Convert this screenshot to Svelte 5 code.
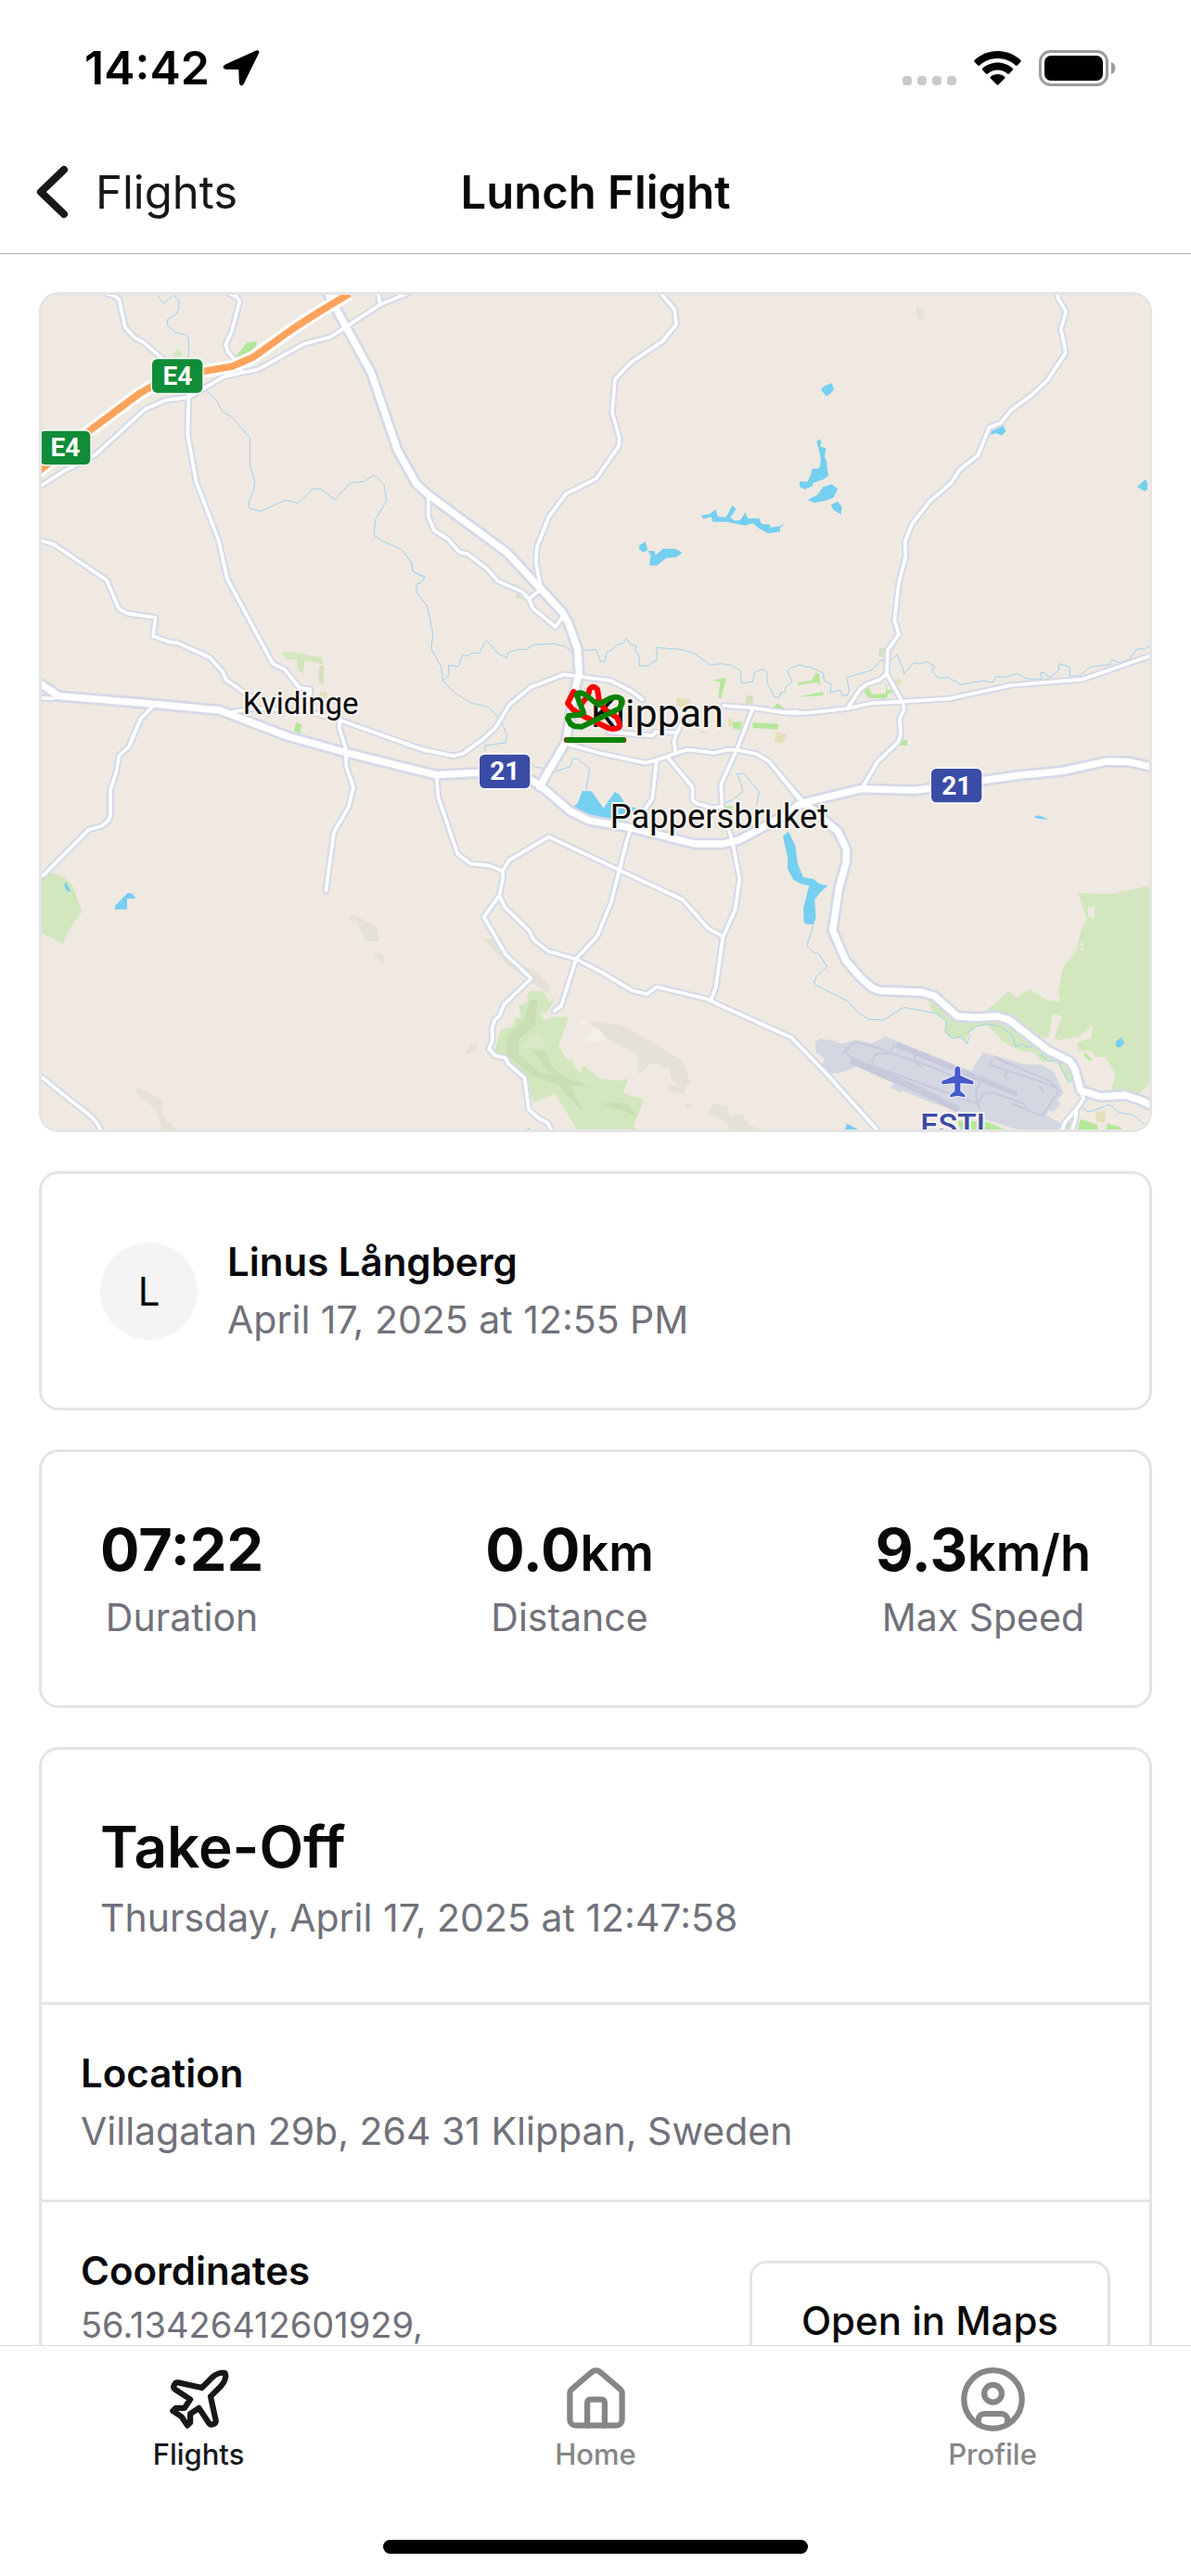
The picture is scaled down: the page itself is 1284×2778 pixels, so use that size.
<script lang="ts">
  interface Tile {
    x: number;
    y: number;
    streams?: string[];
    roads?: string[];
    majorRoads?: string[];
  }

  // Road and stream lines, one entry per map tile
  const tiles: Tile[] = [
    {
      x: 0,
      y: 0,
      streams: [
        "M385 20L410 52 440 24 458 40 458 72 443 93 422 103 422 124 452 148 478 152 490 163 490 225",
        "M548 335L577 360 600 402 632 420 689 488 689 580 704 627 701 655 684 697 687 715 724 724 800 689 846 697 893 650 917 652 963 687 1013 632 1058 628 1087 608 1097 612 1123 640 1130 690 1094 752 1090 803 1115 820 1178 847 1210 890 1215 918 1255 938"
      ],
      roads: [
        "M225 20L245 25 265 38 285 130 315 162 345 178 410 235",
        "M620 20L645 30 655 45 630 140 610 185 617 208 640 235 660 268",
        "M15 640L90 592 190 540 350 393 418 364 490 355 605 288 715 265 862 183 950 160 1110 55 1215 12",
        "M490 350L487 478 515 630 587 818 615 943 762 1217 800 1235 848 1295 883 1300 880 1340",
        "M1110 55L1103 20",
        "M15 820L52 830 225 947 265 1040 292 1055 383 1068 375 1128 428 1147 455 1150 558 1197 600 1243 612 1270 690 1324",
        "M15 1328L50 1330 70 1322"
      ],
      majorRoads: [
        "M935 10L1080 275 1165 525 1225 633 1262 668 1520 858 1615 960 1700 1052 1720 1090 1748 1170 1753 1250 1735 1320 1710 1470 1625 1615",
        "M15 1285L70 1322 380 1348 590 1368 700 1410 810 1452 1000 1505 1200 1555 1290 1577 1430 1570 1600 1595"
      ]
    },
    {
      x: 1200,
      y: 0,
      streams: [
        "M10 890L15 918 55 938 42 955 27 960 27 987 62 1030 80 1120 75 1170 107 1227 112 1272 148 1310 205 1345 260 1357 290 1390 303 1410 320 1447 315 1473 250 1482 248 1500",
        "M112 1272L133 1253 130 1222 162 1227 175 1190 195 1192 207 1183 230 1183 250 1145 258 1145 287 1182 318 1198 325 1180 362 1170 382 1172 408 1155 475 1153 508 1162 530 1178 560 1175 608 1172 622 1210 637 1210 643 1180 660 1172 672 1157 693 1153 705 1135 718 1153 738 1160 733 1173 748 1192 747 1224 780 1224 787 1214 805 1206 803 1165 890 1172 930 1187 978 1222 1012 1217 1045 1222 1075 1240 1078 1280 1113 1276 1122 1243 1150 1235 1160 1245 1162 1282 1185 1326 1200 1325 1205 1312"
      ],
      roads: [
        "M818 20L862 72 867 120 823 174 720 243 669 297 660 405 683 487 682 512 608 619 510 668 455 742 417 838 413 890 428 965",
        "M66 680L65 742 85 787 130 815 167 857 192 862 255 910 290 950 370 985 390 1008 405 1040 477 1098 500 1065",
        "M390 1008L425 980"
      ]
    },
    {
      x: 2400,
      y: 0,
      streams: [
        "M0 1325L5 1312 20 1308 20 1295 42 1275 27 1243 35 1232 67 1221 85 1228 100 1227 143 1248 145 1272 168 1283 165 1310 198 1303 203 1320 220 1320 227 1305 218 1263 302 1237 325 1208 370 1198 382 1188 400 1232 403 1250 435 1214 455 1218 475 1210 503 1225 495 1240 512 1263 550 1263 588 1285 658 1273 690 1278 703 1258 728 1262 770 1249 798 1265 850 1268 845 1247 858 1247 875 1263 905 1238 903 1217 940 1228 940 1257 970 1257 1008 1227 1070 1220 1075 1205 1103 1214 1132 1204 1158 1169 1180 1170 1200 1158"
      ],
      roads: [
        "M900 20L903 37 928 78 911 136 922 180 926 212 868 300 818 347 752 395 717 438 680 452 643 543 583 590 557 632 487 692 430 765 407 822 409 870 387 955 373 1077 387 1122 351 1173 348 1250 398 1340 404 1365 390 1395 393 1450 385 1470 318 1535 268 1620",
        "M348 1250L325 1270 285 1283 262 1300 222 1360",
        "M0 1373L50 1378 105 1375 222 1362 300 1345 398 1340 553 1330 750 1287 980 1268 1200 1192"
      ]
    },
    {
      x: 0,
      y: 1350,
      roads: [
        "M380 0L335 45 297 135 265 165 257 215 237 275 237 360 230 375 210 392 167 404 22 550 5 556",
        "M980 50L977 75 998 140 1000 200 1023 267 1007 332 960 412 934 602",
        "M15 1205L178 1335 190 1348 212 1385",
        "M620 25L700 12 870 20 980 50 1260 150"
      ]
    },
    {
      x: 1200,
      y: 1170,
      streams: [
        "M400 370L412 382 450 387 480 395 525 380 533 355 548 355 587 387 575 460",
        "M1020 500L1050 487 1082 462 1078 437 1063 403 1087 403 1135 463 1127 505"
      ],
      roads: [
        "M0 310L50 325 147 346 177 338 240 293 282 255 328 180 395 124 505 82 550 88 655 102 720 135 757 163",
        "M1020 183L1115 190 1215 205 1260 203",
        "M1115 190L1063 325 1012 437 1015 510 1048 620 1072 742 1058 842 1018 932 995 1095 978 1137",
        "M510 305L625 338 765 368 800 360 902 325 990 336 1030 326 1065 326 1128 340 1165 362 1275 490",
        "M650 268L790 280 800 268 870 270 885 240",
        "M865 335L860 300 868 268",
        "M838 348L920 447 920 490 935 500 985 513 1015 510",
        "M803 365L790 483 765 520",
        "M92 410L97 478 160 663 203 695 262 700 305 718 327 683 455 607 683 715 887 810 970 903 1018 930",
        "M305 718L307 740 295 797 245 867 315 987 398 1065 310 1150 295 1187 280 1200 272 1225 272 1268 261 1293 281 1315 315 1323 322 1340 377 1388 390 1490 425 1520 450 1532 468 1565",
        "M295 797L313 835 392 912 405 940 452 977 543 1003 625 1045 725 1105 772 1117 803 1093 960 1130 1240 1257 1350 1370 1530 1570",
        "M718 590L710 610 683 715 657 818 612 928 543 1003 495 1155 473 1170"
      ],
      majorRoads: [
        "M400 425L425 440 525 525 585 555 720 578 925 630 1020 630 1070 618 1170 565 1275 498"
      ]
    },
    {
      x: 2400,
      y: 1290,
      streams: [
        "M113 765L90 840 112 862 127 865 155 907 120 940 113 957 118 967 220 1018 257 1057 290 1078 338 1080 403 1039 513 1060 540 1085 537 1118 558 1138 588 1135 607 1158 617 1130 610 1120 637 1100 672 1093 715 1100 752 1127 765 1165 785 1155 797 1168 825 1165",
        "M848 1187L850 1197 873 1213 900 1213 935 1280 947 1277",
        "M975 1350L993 1375 1012 1375 1068 1353 1100 1380 1145 1387 1182 1418"
      ],
      roads: [
        "M0 285L75 378",
        "M975 1308L985 1335 960 1370 925 1410 912 1445",
        "M962 1370L958 1405 943 1445"
      ],
      majorRoads: [
        "M60 385L75 378 265 332 440 337 490 330 660 305 780 288 915 275 1060 243 1130 245 1205 261",
        "M75 378L110 400 155 440 190 470 217 527 217 567 193 655 173 790 215 887 265 945 300 975 325 985 460 990 503 1003 577 1068 640 1072 705 1068 743 1080 873 1180 940 1213 957 1240 975 1308 1040 1328 1120 1323 1170 1340 1205 1357"
      ]
    }
  ];

  const motorway = "M5 595L170 463 330 344 370 320 455 285 545 270 630 256 700 225 825 135 910 80 1010 20";

  const shields = [
    { label: "E4", x: 372, y: 232, color: "#118c38" },
    { label: "E4", x: 9, y: 464, color: "#118c38" },
    { label: "21", x: 1431, y: 1511, color: "#3b4ca6" },
    { label: "21", x: 2892, y: 1557, color: "#3b4ca6" }
  ];

  const stats = [
    { value: "07:22", unit: "", label: "Duration" },
    { value: "0.0", unit: "km", label: "Distance" },
    { value: "9.3", unit: "km/h", label: "Max Speed" }
  ];

  let activeTab = "Flights";
</script>

<div class="screen">
  <div class="status-bar">
    <div class="status-left">
      <span>14:42</span>
      <svg width="40" height="40" viewBox="0 0 40 40" aria-hidden="true">
        <path d="M36 1.500 3 16.500C-.5 18.300 0 21.500 4 21.700L17.300 22 17.800 35.500C18 40 21.500 40.300 23 37L39 4.500C40 2 38.500.5 36 1.500Z" />
      </svg>
    </div>
    <div class="status-right">
      <svg width="58" height="39" viewBox="0 0 58 39" fill="#c9c9c9" aria-hidden="true">
        <rect x="0" y="28" width="10" height="10" rx="4" />
        <rect x="16" y="28" width="10" height="10" rx="4" />
        <rect x="32" y="28" width="10" height="10" rx="4" />
        <rect x="48" y="28" width="10" height="10" rx="4" />
      </svg>
      <svg width="51" height="37" viewBox="0 0 51 37" aria-hidden="true">
        <path d="M25.500 0C35 0 43.700 3.600 50.300 9.800 50.900 10.400 50.900 11.200 50.400 11.800L46.700 15.500C46.200 16 45.400 16 44.800 15.500 39.600 10.700 32.900 8 25.500 8 18.100 8 11.400 10.700 6.200 15.500 5.600 16 4.800 16 4.300 15.500L.6 11.800C.1 11.200.1 10.400.7 9.800 7.300 3.600 16 0 25.500 0Z" />
        <path d="M25.500 12.500C31.700 12.500 37.400 14.800 41.800 18.700 42.400 19.200 42.400 20 41.800 20.600L38 24.400C37.500 24.900 36.700 24.900 36.100 24.400 33.200 21.900 29.500 20.400 25.500 20.400 21.500 20.400 17.800 21.900 14.900 24.400 14.300 24.900 13.500 24.900 13 24.400L9.200 20.600C8.600 20 8.600 19.200 9.200 18.700 13.600 14.800 19.300 12.500 25.500 12.500Z" />
        <path d="M25.500 25C28.400 25 31 26 33.100 27.700 33.700 28.200 33.700 29 33.200 29.500L26.500 36.200C25.900 36.800 25.100 36.800 24.500 36.200L17.800 29.500C17.300 29 17.300 28.200 17.900 27.700 20 26 22.600 25 25.500 25Z" />
      </svg>
      <svg width="84" height="39" viewBox="0 0 84 39" aria-hidden="true">
        <rect x="1.500" y="1.500" width="72" height="36" rx="11" fill="none" stroke="#9b9b9b" stroke-width="3" />
        <rect x="6" y="6" width="63" height="27" rx="7" />
        <path d="M78 13C84 15 84 24 78 26Z" fill="#9b9b9b" />
      </svg>
    </div>
  </div>

  <header class="nav">
    <a class="back" href="#flights">
      <svg width="36" height="60" viewBox="0 0 36 60" fill="none" stroke="#18181b" stroke-width="8" stroke-linecap="round" stroke-linejoin="round" aria-hidden="true">
        <path d="M30 6 5 30 30 54" />
      </svg>
      Flights
    </a>
    <h1>Lunch Flight</h1>
  </header>

  <main>
    <section class="card map">
      <svg viewBox="15 24 3582 2700" role="img" aria-label="Flight map">
        <rect x="15" y="24" width="3582" height="2700" fill="#efe9e1" />

        <!-- Hills -->
        <g fill="#e5e1d6">
          <path d="M2844 57L2870 75 2863 108 2844 98ZM1025 2028L1100 2072 1107 2115 1063 2115 1035 2055 1008 2045ZM1098 2145L1126 2162 1117 2187 1090 2163ZM325 2587L404 2627 405 2675 450 2724 405 2724 380 2657 315 2602Z" />
          <path d="M1440 2106L1480 2110 1540 2185 1600 2205 1635 2235 1655 2260 1655 2285 1600 2250 1525 2195ZM1380 2482L1405 2448 1422 2447 1422 2467Z" />
          <path d="M1780 2370L1890 2387 1960 2425 2088 2502 2115 2580 2100 2582 2090 2610 2043 2600 2043 2582 2073 2582 2050 2557 2047 2528 2017 2525 2015 2512 1985 2510 1945 2548 1943 2480 1860 2440ZM2190 2640L2234 2650 2240 2680 2280 2675 2303 2710 2340 2724 2240 2724 2230 2700 2170 2672ZM2100 2640L2122 2654 2097 2653Z" />
        </g>
        <g fill="#f3eee8">
          <path d="M1755 2372L1770 2366 1775 2380 1755 2385ZM1770 2425L1800 2395 1822 2403 1840 2438 1775 2440ZM845 1949L878 1954 847 1962Z" />
        </g>

        <!-- Forest -->
        <g fill="#d2e7bd">
          <path d="M15 1895L45 1892 95 1911 117 1940 145 2020 107 2072 82 2124 15 2087Z" />
          <path d="M1590 2276L1637 2276 1655 2312 1676 2295 1650 2348 1625 2345 1640 2370 1670 2360 1719 2362 1686 2453 1712 2497 1733 2503 1735 2520 1757 2538 1768 2517 1820 2560 1880 2567 1911 2560 1895 2605 1940 2622 1948 2620 1962 2630 1928 2715 1945 2724 1745 2724 1676 2608 1605 2638 1580 2560 1520 2510 1480 2470 1500 2400 1538 2392 1548 2362 1565 2362 1557 2322 1585 2312Z" />
          <path d="M3366 1959L3470 1963 3597 1936 3597 2578 3560 2610 3475 2600 3487 2543 3455 2490 3420 2490 3410 2468 3390 2470 3370 2470 3363 2442 3410 2430 3415 2385 3370 2425 3320 2430 3305 2437 3290 2428 3315 2358 3285 2350 3272 2425 3225 2427 3143 2370 3067 2343 3142 2277 3168 2297 3210 2270 3268 2307 3310 2310 3303 2280 3318 2200 3362 2145 3375 2085 3395 2040Z" />
          <path d="M2883 2307L2920 2318 2975 2362 3100 2370 3150 2400 3225 2460 3340 2510 3350 2560 3338 2572 3297 2503 3250 2505 3222 2475 3180 2470 3125 2440 3072 2387 3035 2390 3008 2420 3005 2448 2988 2425 2950 2425 2935 2405 2940 2370 2895 2345Z" />
          <path d="M437 220L452 198 465 208 468 225ZM792 1182L822 1179 922 1197 924 1218 866 1206 860 1249 841 1235 840 1204 805 1204Z" />
        </g>
        <g fill="#c9deb3">
          <path d="M1595 2305L1618 2303 1610 2390 1560 2430 1555 2480 1620 2535 1720 2560 1790 2585 1720 2580 1770 2670 1710 2610 1690 2580 1600 2550 1520 2480 1520 2420 1575 2370ZM1600 2465L1640 2470 1665 2520 1710 2560 1650 2535ZM1820 2638L1912 2640 1937 2680Z" />
        </g>
        <path d="M1590 2425L1620 2410 1638 2425 1640 2460 1570 2460Z" fill="#d9eac9" />
        <path d="M3398 2006L3420 2003 3420 2040 3400 2038ZM3372 2120H3382V2130H3372ZM3375 2135H3385V2145H3375Z" fill="#efe9e1" />

        <!-- Parks -->
        <g fill="#b5e79b">
          <path d="M640 225L680 178 711 174 705 195 670 225ZM838 1407L857 1413 851 1443 831 1435ZM2185 1270L2228 1263 2213 1330 2203 1328 2210 1277ZM2460 1277L2505 1272 2520 1247 2530 1250 2533 1287 2520 1277 2460 1287ZM2457 1325L2542 1308 2543 1320ZM2672 1305L2690 1295 2700 1317 2745 1313 2745 1275 2750 1303 2770 1300 2770 1310 2752 1315 2748 1330 2690 1328ZM2787 1465H2814V1482H2787Z" />
          <path d="M2250 1405L2280 1407 2275 1430 2250 1427ZM2315 1407L2398 1413 2395 1430 2315 1425ZM2380 1360L2395 1345 2422 1365 2385 1368ZM2225 1680L2250 1678 2245 1693ZM2140 1435L2160 1437 2157 1442ZM3388 2473L3412 2500 3405 2502 3385 2485Z" />
          <path d="M2975 2695L3075 2700 3130 2724 2985 2724ZM3195 2700L3240 2715 3230 2724 3185 2724ZM3375 2690L3430 2710 3430 2724 3365 2724ZM3460 2705L3500 2715 3510 2724 3460 2724ZM3325 2715L3342 2692 3335 2724Z" />
        </g>
        <g fill="#e5dfba">
          <path d="M915 1307L938 1308 935 1328 915 1325ZM2067 1328L2112 1332 2110 1355 2070 1355ZM2235 1395L2252 1397 2250 1420 2235 1420ZM2390 1437L2425 1445 2410 1475 2385 1470ZM2775 1275L2785 1265 2796 1278 2785 1290ZM3425 2667L3455 2665 3453 2702 3423 2697Z" />
        </g>
        <g fill="#d8dfbd">
          <path d="M910 1245L915 1224 927 1224 927 1281 912 1281ZM1545 1000L1555 990 1580 1015ZM2293 1320H2315V1346H2292ZM2724 1167H2742V1193H2721Z" />
        </g>

        <!-- Airfield -->
        <path d="M2515 2445L2530 2430 2570 2435 2600 2447 2650 2435 2700 2445 2745 2423 3020 2535 3060 2475 3200 2515 3250 2515 3290 2540 3320 2605 3300 2630 3310 2640 3290 2665 3270 2665 3265 2680 3315 2705 3305 2724 3170 2724 2900 2640 2800 2600 2795 2605 2760 2590 2770 2575 2650 2520 2600 2540 2555 2545 2560 2535 2540 2515 2548 2495 2520 2475Z" fill="#d4d7e1" />
        <g fill="none" stroke="#c6c8dc" stroke-width="6">
          <path d="M2633 2500L2860 2600 2980 2660" stroke-width="22" />
          <path d="M2780 2450L3170 2610" stroke-width="18" />
          <path d="M2605 2480L2645 2440 2720 2460 2765 2480 2850 2505 2960 2550M2640 2495Q2605 2475 2620 2455M2700 2525Q2700 2485 2720 2478L2755 2478 2775 2450M2860 2520Q2830 2510 2840 2485M2705 2520L3040 2640 3060 2610 3090 2605 3190 2640 3205 2660M3050 2660Q3030 2620 3040 2590L3060 2550M3090 2500L3080 2515 3220 2560 3300 2590M3095 2490L3280 2570 3305 2600 3250 2680 3150 2640M3145 2530L3130 2550 3140 2560M3240 2580L3255 2605" />
        </g>

        <!-- Lakes -->
        <g fill="#75cff0">
          <path d="M2535 330L2548 318 2570 310 2577 330 2565 345 2552 352ZM2521 500L2530 490 2536 500 2533 515 2552 520 2547 548 2553 560 2559 610 2545 620 2510 632 2508 642 2483 653 2466 645 2466 628 2492 628 2505 600 2505 588 2530 585 2535 555 2527 518ZM2492 688L2525 670 2542 645 2570 637 2590 652 2575 680 2550 690 2513 697ZM2568 703L2590 692 2603 710 2600 734 2575 720ZM3084 478L3085 465 3125 448 3134 464 3120 479 3100 470ZM3558 645L3584 621 3591 630 3591 653 3582 659Z" />
          <path d="M1947 835L1967 822 1975 848 1962 857 1948 848ZM1975 852L1997 853 2000 866 2025 845 2065 846 2087 858 2068 872 2035 875 2005 899 1980 899 1985 868ZM2148 738L2175 733 2195 718 2202 742 2228 743 2248 706 2261 717 2242 745 2258 755 2275 752 2291 727 2298 747 2335 747 2343 765 2370 767 2372 776 2400 773 2419 763 2403 778 2403 790 2365 796 2335 780 2315 763 2290 770 2230 758 2185 758 2180 742 2155 749Z" />
          <path d="M87 1935L93 1923 110 1955 97 1952ZM252 2012V2000L293 1959 308 1961 320 1977 291 1978V2012Z" />
          <path d="M1730 1683L1748 1670 1763 1629 1793 1630 1832 1685 1868 1632 1883 1640 1905 1675 1950 1688 1920 1712 1850 1720 1770 1700Z" />
          <path d="M2412 1775L2430 1760 2452 1805 2460 1865 2478 1908 2513 1915 2530 1930 2557 1935 2535 1955 2515 1980 2519 2040 2510 2060 2490 2060 2480 2055 2478 2010 2497 1935 2470 1930 2445 1915 2427 1880 2428 1845ZM3222 1713L3240 1708 3273 1721 3235 1718ZM3489 2440L3505 2427 3518 2443 3505 2457 3490 2458ZM2612 2724L2620 2705 2655 2724ZM1580 2724L1592 2720 1595 2724Z" />
        </g>

        {#each tiles as tile}
          <g class="stream" transform="translate({tile.x} {tile.y})">
            {#each tile.streams ?? [] as d}<path {d} />{/each}
          </g>
        {/each}
        {#each tiles as tile}
          <g class="casing" transform="translate({tile.x} {tile.y})">
            {#each tile.roads ?? [] as d}<path {d} />{/each}
            {#each tile.majorRoads ?? [] as d}<path class="major" {d} />{/each}
          </g>
        {/each}
        {#each tiles as tile}
          <g class="road" transform="translate({tile.x} {tile.y})">
            {#each tile.roads ?? [] as d}<path {d} />{/each}
            {#each tile.majorRoads ?? [] as d}<path class="major" {d} />{/each}
          </g>
        {/each}
        <path d={motorway} fill="none" stroke="#fff" stroke-width="42" stroke-linejoin="round" />
        <path d={motorway} fill="none" stroke="#ffa35c" stroke-width="23" stroke-linejoin="round" />

        {#each shields as shield}
          <rect x={shield.x} y={shield.y} width="163" height="109" rx="16" fill={shield.color} stroke="#fff" stroke-width="8" paint-order="stroke" />
          <text class="shield" x={shield.x + 82} y={shield.y + 83}>{shield.label}</text>
        {/each}

        <!-- Airport marker -->
        <path d="M2977 2520Q2985 2520 2986 2532V2550L3028 2568V2578L2986 2574V2600L3001 2612V2620L2977 2615 2953 2620V2612L2968 2600V2574L2926 2578V2568L2968 2550V2532Q2969 2520 2977 2520Z" fill="#465bcb" stroke="#e9ebf5" stroke-width="8" paint-order="stroke" />

        <text class="place" x="665" y="1380" font-size="99">Kvidinge</text>
        <text class="place" x="1790" y="1421" font-size="129">Klippan</text>
        <text class="place" x="1853" y="1750" font-size="109">Pappersbruket</text>
        <text class="place airport" x="2857" y="2746" font-size="102">ESTL</text>

        <!-- Flight track -->
        <g fill="none" stroke-width="18" stroke-linecap="round" stroke-linejoin="round">
          <path d="M1762 1345L1782 1320 1787 1300Q1797 1285 1812 1300L1819 1345 1842 1370 1874 1390Q1889 1415 1882 1423 1867 1432 1847 1425L1767 1387 1732 1365 1716 1345 1735 1308 1750 1318" stroke="#ff0000" />
          <path d="M1712 1464H1897" stroke="#ff0000" />
          <path d="M1745 1318L1767 1375 1760 1382 1720 1385 1716 1394 1725 1412 1739 1420 1762 1421 1882 1363Q1897 1345 1890 1332 1877 1320 1852 1330L1814 1350 1772 1317Q1752 1307 1745 1318Z" stroke="#078300" />
          <path d="M1715 1464H1895" stroke="#078300" />
        </g>
      </svg>
    </section>

    <section class="card pilot">
      <div class="avatar">L</div>
      <div>
        <h3>Linus Långberg</h3>
        <p>April 17, 2025 at 12:55 PM</p>
      </div>
    </section>

    <section class="card stats">
      {#each stats as stat}
        <div class="stat">
          <div class="value">{stat.value}<span>{stat.unit}</span></div>
          <p>{stat.label}</p>
        </div>
      {/each}
    </section>

    <section class="card">
      <div class="card-header">
        <h2>Take-Off</h2>
        <p>Thursday, April 17, 2025 at 12:47:58</p>
      </div>
      <div class="row">
        <div>
          <h3>Location</h3>
          <p>Villagatan 29b, 264 31 Klippan, Sweden</p>
        </div>
      </div>
      <div class="row">
        <div>
          <h3>Coordinates</h3>
          <p class="coordinates">56.13426412601929,</p>
        </div>
        <button>Open in Maps</button>
      </div>
    </section>
  </main>

  <nav class="tab-bar">
    <div class="tabs">
      <a href="#flights" class:active={activeTab === "Flights"} on:click={() => (activeTab = "Flights")}>
        <svg class="icon" viewBox="0 0 24 24" aria-hidden="true">
          <path d="M17.800 19.200 16 11l3.500-3.500C21 6 21.500 4 21 3c-1-.5-3 0-4.500 1.500L13 8 4.800 6.200c-.5-.1-.9.1-1.100.5l-.3.5c-.2.5-.1 1 .3 1.300L9 12l-2 3H4l-1 1 3 2 2 3 1-1v-3l3-2 3.500 5.300c.3.4.8.5 1.300.3l.5-.2c.4-.3.6-.7.5-1.200z" />
        </svg>
        Flights
      </a>
      <a href="#home" class:active={activeTab === "Home"} on:click={() => (activeTab = "Home")}>
        <svg class="icon" viewBox="0 0 24 24" aria-hidden="true">
          <path d="M15 21v-8a1 1 0 0 0-1-1h-4a1 1 0 0 0-1 1v8" />
          <path d="M3 10a2 2 0 0 1 .709-1.528l7-5.999a2 2 0 0 1 2.582 0l7 5.999A2 2 0 0 1 21 10v9a2 2 0 0 1-2 2H5a2 2 0 0 1-2-2z" />
        </svg>
        Home
      </a>
      <a href="#profile" class:active={activeTab === "Profile"} on:click={() => (activeTab = "Profile")}>
        <svg class="icon" viewBox="0 0 24 24" aria-hidden="true">
          <circle cx="12" cy="12" r="10" />
          <circle cx="12" cy="10" r="3" />
          <path d="M7 20.662V19a2 2 0 0 1 2-2h6a2 2 0 0 1 2 2v1.662" />
        </svg>
        Profile
      </a>
    </div>
    <div class="home-indicator"></div>
  </nav>
</div>

<style>
  :global(body) {
    margin: 0;
  }

  .screen {
    display: flex;
    flex-direction: column;
    height: 100vh;
    overflow: hidden;
    background: #fff;
    color: #09090b;
    font-family: Inter, sans-serif;
    font-size: 42px;
    line-height: 63px;
  }

  h1,
  h2,
  h3,
  p {
    margin: 0;
    font-size: inherit;
  }

  h3 {
    font-weight: 600;
  }

  p {
    color: #71717a;
    font-size: 41px;
  }

  a {
    color: inherit;
    text-decoration: none;
  }

  .status-bar {
    display: flex;
    flex-shrink: 0;
    justify-content: space-between;
    align-items: center;
    box-sizing: border-box;
    height: 141px;
    padding: 5px 80px 0 91px;
    color: #000;
  }

  .status-left,
  .status-right {
    display: flex;
    align-items: center;
    gap: 19px;
  }

  .status-left {
    gap: 14px;
    font-size: 50px;
    font-weight: 600;
  }

  .nav {
    display: grid;
    flex-shrink: 0;
    grid-template-columns: 1fr auto 1fr;
    align-items: center;
    box-sizing: border-box;
    height: 133px;
    padding: 0 39px;
    border-bottom: 1px solid #b2b2b2;
    font-size: 49px;
  }

  .nav h1 {
    font-weight: 600;
  }

  .back {
    display: flex;
    align-items: center;
    gap: 28px;
    color: #18181b;
  }

  main {
    display: flex;
    flex: 1;
    flex-direction: column;
    gap: 42px;
    min-height: 0;
    padding: 41px 42px 0;
    overflow: hidden;
  }

  .card {
    flex-shrink: 0;
    border: 3px solid #e4e4e4;
    border-radius: 21px;
  }

  .map {
    overflow: hidden;
  }

  .map svg {
    display: block;
    width: 100%;
  }

  .stream,
  .casing,
  .road {
    fill: none;
    stroke-linecap: round;
    stroke-linejoin: round;
  }

  .stream {
    stroke: #a0d0ee;
    stroke-width: 3px;
  }

  .casing {
    stroke: #d5d9e7;
    stroke-width: 23px;
  }

  .casing .major {
    stroke-width: 39px;
  }

  .road {
    stroke: #fff;
    stroke-width: 11px;
  }

  .road .major {
    stroke-width: 22px;
  }

  .shield {
    fill: #fff;
    font-family: Roboto, sans-serif;
    font-size: 84px;
    font-weight: 700;
    text-anchor: middle;
  }

  .place {
    fill: #0c0c0c;
    stroke: #f8f5f1;
    stroke-width: 12px;
    stroke-linejoin: round;
    paint-order: stroke;
    font-family: Roboto, sans-serif;
  }

  .airport {
    fill: #3b4ca6;
    font-weight: 500;
  }

  .pilot {
    display: flex;
    align-items: center;
    gap: 32px;
    padding: 63px;
  }

  .avatar {
    display: flex;
    align-items: center;
    justify-content: center;
    width: 105px;
    height: 105px;
    border-radius: 50%;
    background: #f4f4f5;
  }

  .stats {
    display: flex;
    justify-content: space-between;
    padding: 63px;
    text-align: center;
  }

  .value {
    font-size: 63px;
    font-weight: 700;
    line-height: 84px;
  }

  .value span {
    font-size: 54px;
    font-weight: 600;
    line-height: 63px;
  }

  .card-header {
    padding: 63px 63px 59px;
  }

  h2 {
    margin-bottom: 3px;
    font-size: 62px;
    font-weight: 600;
    line-height: 84px;
  }

  .row {
    display: flex;
    align-items: center;
    justify-content: space-between;
    padding: 42px;
    border-top: 3px solid #e4e4e4;
  }

  .coordinates {
    min-height: 108px;
    font-size: 38px;
    line-height: 54px;
  }

  button {
    padding: 30px 53px;
    border: 3px solid #e4e4e4;
    border-radius: 18px;
    background: #fff;
    color: #09090b;
    font: inherit;
    font-weight: 500;
  }

  .tab-bar {
    display: flex;
    flex-direction: column;
    flex-shrink: 0;
    justify-content: space-between;
    align-items: center;
    box-sizing: border-box;
    height: 249px;
    padding: 20px 0 24px;
    border-top: 1px solid #dcdcdc;
    background: #fff;
  }

  .tabs {
    display: grid;
    grid-template-columns: repeat(3, 1fr);
    width: 100%;
  }

  .tabs a {
    display: flex;
    flex-direction: column;
    align-items: center;
    gap: 4px;
    color: #868686;
    font-size: 31px;
    font-weight: 500;
    line-height: 36px;
  }

  .tabs a.active {
    color: #18181b;
  }

  .icon {
    width: 75px;
    height: 75px;
    fill: none;
    stroke: currentColor;
    stroke-width: 2;
    stroke-linecap: round;
    stroke-linejoin: round;
  }

  .home-indicator {
    width: 458px;
    height: 15px;
    border-radius: 8px;
    background: #000;
  }
</style>
